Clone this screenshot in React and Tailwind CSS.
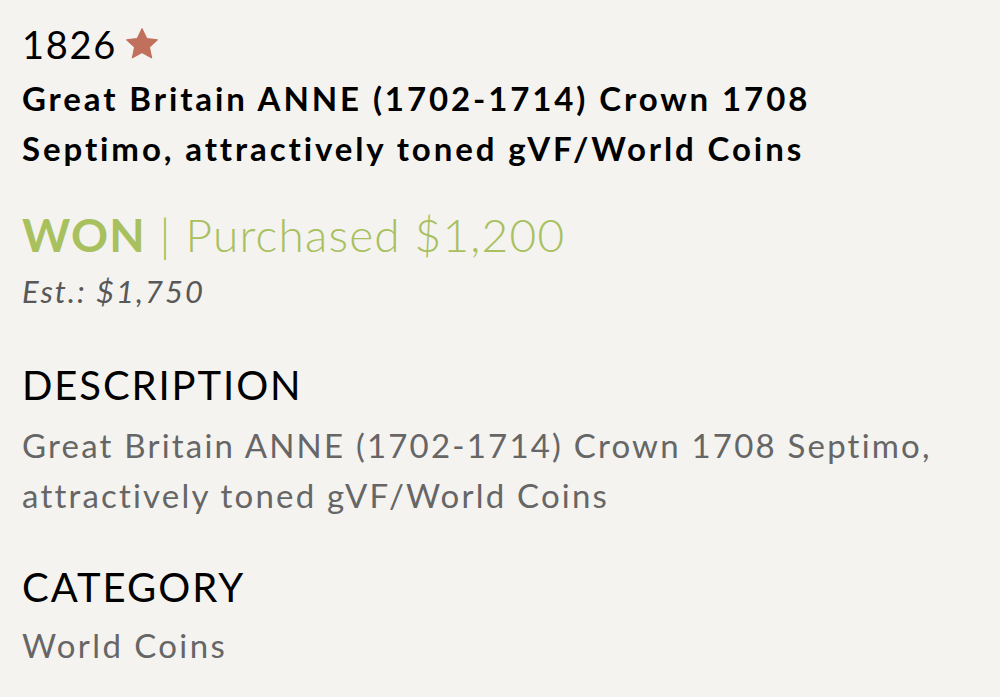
import React from "react";

const Star = () => (
  <svg width="38" height="36" viewBox="0 0 24 24" className="ml-[6px]">
    <path
      d="M12 1.8l3.1 6.6 7.1.8-5.3 4.9 1.5 7.1L12 17.6l-6.4 3.6 1.5-7.1L1.8 9.2l7.1-.8z"
      fill="#c0705c"
      stroke="#c0705c"
      strokeWidth="0.8"
      strokeLinejoin="round"
    />
  </svg>
);

export default function App() {
  return (
    <div
      className="w-[1000px] h-[697px] bg-[#f4f3f0] pl-[22px] pt-[22px] text-black overflow-hidden"
      style={{ fontFamily: "Lato, 'Noto Sans', sans-serif" }}
    >
      <div className="flex items-center h-[44px]">
        <span className="text-[38px] leading-none tracking-[1.75px]">1826</span>
        <Star />
      </div>
      <h1 className="text-[33px] font-bold leading-[50px] tracking-[2.9px] mt-[7px] w-[880px]">
        Great Britain ANNE (1702-1714) Crown 1708 Septimo, attractively toned gVF/World Coins
      </h1>
      <div className="mt-[32px] text-[46px] leading-[60px] tracking-[1.2px] text-[#a8c05e]">
        <span className="font-bold">WON</span>
        <span className="font-light"> | Purchased $1,200</span>
      </div>
      <div className="mt-[6px] text-[31px] italic text-[#585858] leading-[40px] tracking-[2px]">
        Est.: $1,750
      </div>

      <h2 className="mt-[49px] text-[40px] leading-[50px] tracking-[1.9px]">DESCRIPTION</h2>
      <p className="mt-[10px] text-[33px] leading-[50px] tracking-[2.2px] text-[#666] w-[960px]">
        Great Britain ANNE (1702-1714) Crown 1708 Septimo, attractively toned gVF/World Coins
      </p>

      <h2 className="mt-[42px] text-[40px] leading-[50px] tracking-[2px]">CATEGORY</h2>
      <p className="mt-[8px] text-[33px] leading-[50px] tracking-[2.4px] text-[#666]">World Coins</p>
    </div>
  );
}
